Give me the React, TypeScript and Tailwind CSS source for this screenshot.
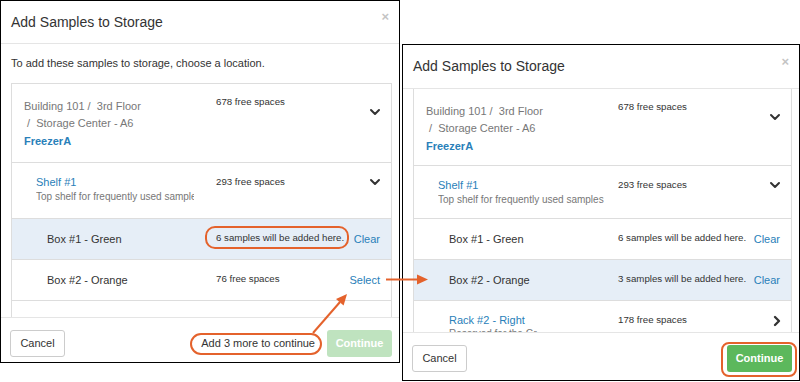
import { ChevronDown, ChevronRight } from "lucide-react";

const LINK = "text-[#2980b9]";

function PathRow({ second }: { second?: boolean }) {
  return (
    <div className={`flex items-start border-b border-[#ddd] pt-[14px] ${second ? "pb-[10px]" : "pb-3"}`}>
      <div className="w-[204px] shrink-0 pl-3 text-[11px] leading-[17px] text-[#777]">
        <div>Building 101 /&nbsp; 3rd Floor</div>
        <div>&nbsp;/&nbsp; Storage Center - A6</div>
        <div className={`mt-px font-bold ${LINK}`}>FreezerA</div>
      </div>
      <div className="-mt-[3px] flex-1 text-[9.7px] leading-[14px] text-[#333]">678 free spaces</div>
      <ChevronDown size={16} strokeWidth={3} className="mr-2 mt-[6px] text-[#333]" />
    </div>
  );
}

function ShelfRow({ second }: { second?: boolean }) {
  return (
    <div className={`flex items-start border-b border-[#ddd] pt-3 ${second ? "pb-[11px]" : "pb-[14px]"}`}>
      <div className="w-[204px] shrink-0 pl-6">
        <div className={`text-[11px] leading-[15px] ${LINK}`}>Shelf #1</div>
        <div
          className={`overflow-hidden whitespace-nowrap text-[10px] leading-[14px] text-[#777] ${second ? "w-[175px]" : "w-[158px]"}`}
        >
          Top shelf for frequently used samples
        </div>
      </div>
      <div className="flex-1 text-[9.7px] leading-[14px] text-[#333]">293 free spaces</div>
      <ChevronDown size={16} strokeWidth={3} className="-mt-px mr-2 text-[#333]" />
    </div>
  );
}

function BoxRow({ name, status, action, active }: { name: string; status: string; action: string; active?: boolean }) {
  return (
    <div className={`flex h-[41px] items-center border-b border-[#ddd] ${active ? "bg-[#e6eef7]" : "bg-white"}`}>
      <div className="w-[204px] shrink-0 pl-[35px] text-[11px] text-[#333]">{name}</div>
      <div className="flex-1 pb-px text-[9.7px] text-[#333]">{status}</div>
      <div className={`pr-[11px] text-[11px] ${LINK}`}>{action}</div>
    </div>
  );
}

function RackRow() {
  return (
    <div className="flex items-start border-b border-[#ddd] pt-3 pb-[13px]">
      <div className="w-[204px] shrink-0 pl-[35px]">
        <div className={`text-[11px] leading-[15px] ${LINK}`}>Rack #2 - Right</div>
        <div className="whitespace-nowrap text-[10px] leading-[12px] text-[#777]">Reserved for the Gr...</div>
      </div>
      <div className="flex-1 text-[9.7px] leading-[14px] text-[#333]">178 free spaces</div>
      <ChevronRight size={16} strokeWidth={3.5} className="mr-[6px] text-[#333]" />
    </div>
  );
}

function Dialog({ second, className }: { second?: boolean; className: string }) {
  return (
    <div className={`absolute flex flex-col overflow-hidden border border-black bg-white ${className}`}>
      <div
        className={`flex shrink-0 items-center justify-between border-b border-[#e5e5e5] pl-[10px] pr-[10px] ${second ? "h-[44px]" : "h-[43px]"}`}
      >
        <span className="text-[14px] text-[#333]">Add Samples to Storage</span>
        <span className="-mt-[10px] text-[13px] font-bold text-[#c4c4c4]">×</span>
      </div>

      <div className="min-h-0 flex-1 overflow-hidden">
        {!second && (
          <p className="pl-[10px] pt-3 pb-[13px] text-[11px] leading-[14px] text-[#333]">
            To add these samples to storage, choose a location.
          </p>
        )}
        <div className={`ml-[10px] mr-[7px] border border-[#ddd] ${second ? "border-t-0" : ""}`}>
          <PathRow second={second} />
          <ShelfRow second={second} />
          <BoxRow name="Box #1 - Green" status="6 samples will be added here." action="Clear" active={!second} />
          <BoxRow
            name="Box #2 - Orange"
            status={second ? "3 samples will be added here." : "76 free spaces"}
            action={second ? "Clear" : "Select"}
            active={second}
          />
          {second ? <RackRow /> : <div className="h-[40px]" />}
        </div>
      </div>

      <div
        className={`flex shrink-0 items-start justify-between border-t border-[#e5e5e5] pl-[9px] pr-[7px] pt-3 ${second ? "h-[48px]" : "h-[45px]"}`}
      >
        <button className="h-[27px] w-[55px] rounded-[3px] border border-[#ccc] bg-white text-[11px] text-[#333]">
          Cancel
        </button>
        <div className="flex items-center">
          {!second && <span className="mr-3 text-[11px] text-[#333]">Add 3 more to continue</span>}
          <button
            className={`h-[27px] w-[65px] rounded-[3px] text-[11px] font-bold text-white ${second ? "bg-[#5cb85c]" : "bg-[#bfe3bf]"}`}
          >
            Continue
          </button>
        </div>
      </div>
    </div>
  );
}

export default function App() {
  return (
    <div className="relative h-[382px] w-[800px] overflow-hidden bg-white font-['Liberation_Sans',Arial,sans-serif]">
      <Dialog className="left-0 top-0 h-[363px] w-[400px]" />
      <Dialog second className="left-[402px] top-[44px] h-[337px] w-[398px]" />

      {/* annotations */}
      <svg className="pointer-events-none absolute left-0 top-0" width="800" height="382" viewBox="0 0 800 382">
        <g fill="none" stroke="#e4622c" strokeWidth="2">
          <rect x="206" y="227" width="142" height="21" rx="9" />
          <rect x="191" y="334" width="130" height="20" rx="10" />
          <rect x="722" y="343" width="74" height="33" rx="7" />
          <line x1="313" y1="333" x2="340" y2="302" />
          <line x1="386" y1="279.5" x2="418" y2="279.5" />
        </g>
        <g fill="#e4622c">
          <polygon points="347,294 343.6,305.6 336,299" />
          <polygon points="428,279.5 417,274.5 417,284.5" />
        </g>
      </svg>
    </div>
  );
}
